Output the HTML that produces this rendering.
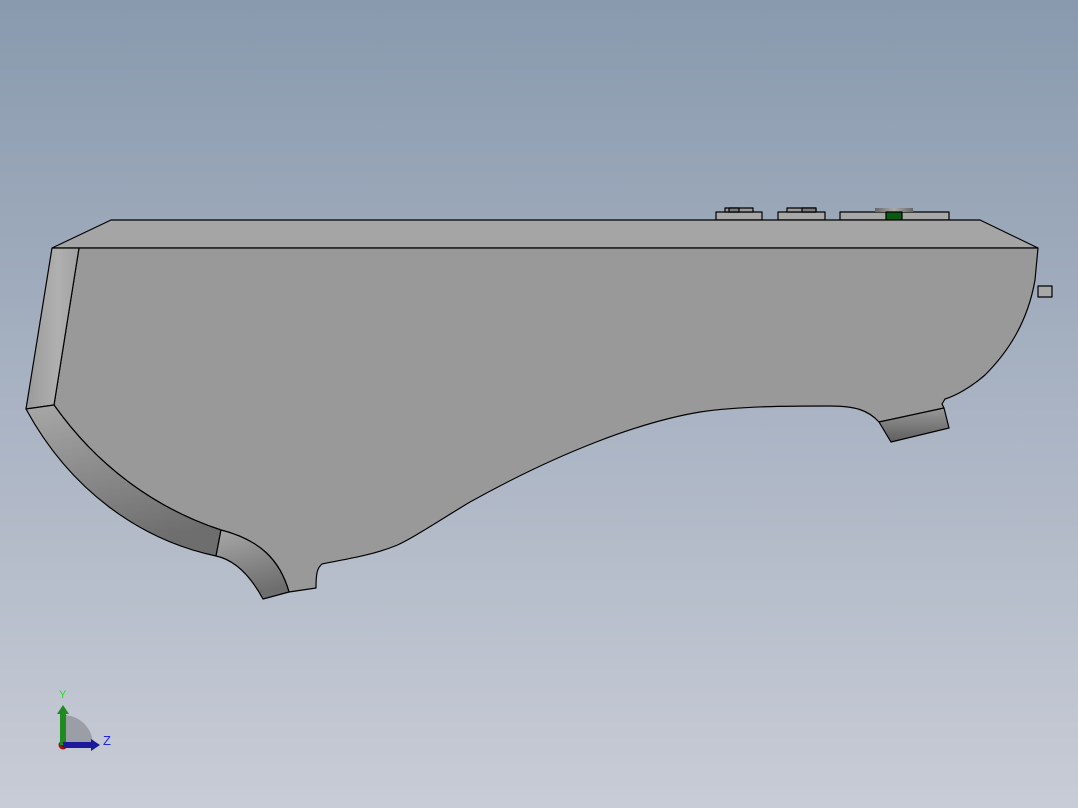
<!DOCTYPE html>
<html><head><meta charset="utf-8"><style>
html,body{margin:0;padding:0}
body{width:1078px;height:808px;overflow:hidden;background:linear-gradient(#899aae,#a9b3c3 50%,#c8ccd6);font-family:"Liberation Sans",sans-serif}
svg{position:absolute;left:0;top:0}
</style></head><body>
<svg width="1078" height="808" viewBox="0 0 1078 808">
<defs>
<linearGradient id="lg" x1="0" y1="0" x2="1" y2="0"><stop offset="0" stop-color="#9a9a9a"/><stop offset="0.6" stop-color="#b0b0b0"/><stop offset="1" stop-color="#a2a2a2"/></linearGradient>
<linearGradient id="cg" x1="0" y1="0" x2="0.3" y2="1"><stop offset="0" stop-color="#a8a8a8"/><stop offset="1" stop-color="#6e6e6e"/></linearGradient>
<linearGradient id="sg" x1="0" y1="0" x2="0" y2="1"><stop offset="0" stop-color="#999"/><stop offset="1" stop-color="#5e5e5e"/></linearGradient>
<linearGradient id="bt" x1="0" y1="0" x2="1" y2="0"><stop offset="0" stop-color="#666"/><stop offset="0.5" stop-color="#aaa"/><stop offset="1" stop-color="#666"/></linearGradient>
</defs>
<g stroke="#000" stroke-width="1.2" stroke-linejoin="round">
<!-- buttons -->
<rect x="716" y="212" width="46" height="8" fill="#a8a8a8"/>
<rect x="725" y="208" width="28" height="4" fill="#9a9a9a"/>
<rect x="729" y="208" width="10" height="4" fill="#7a7a7a"/>
<rect x="778" y="212" width="47" height="8" fill="#a8a8a8"/>
<rect x="787" y="208" width="29" height="4" fill="#9a9a9a"/>
<rect x="802" y="208" width="14" height="4" fill="#7a7a7a"/>
<rect x="840" y="212" width="109" height="8" fill="#a8a8a8"/>
<rect x="875" y="208" width="38" height="4" fill="url(#bt)" stroke="none"/>
<rect x="886" y="212" width="16" height="8" fill="#0a5a12"/>
<!-- top face -->
<polygon points="52,248 111,220 980,220 1038,248" fill="#a5a5a5"/>
<!-- right small -->
<rect x="1038" y="286" width="14" height="11" fill="#a8a8a8"/>
<!-- main face -->
<path d="M79,248 L1038,248 L1035,280 C1028,320 1010,350 985,375 C970,388 955,396 945,399 L942,404 L944,408 L879,422 C868,410 855,406 830,406 C790,406 740,406 700,412 C640,422 560,452 470,502 C440,520 410,540 395,546 C370,556 340,560 322,564 C317,568 316,574 316,588 L289,592 C280,560 260,540 221,530 C160,510 100,470 54,405 Z" fill="#999"/>
<!-- left strip -->
<polygon points="52,248 79,248 54,405 26,409" fill="url(#lg)"/>
<!-- bottom-left curved strip -->
<path d="M26,409 L54,405 C100,470 160,510 221,530 L216,556 C140,540 70,490 26,409 Z" fill="url(#cg)"/>
<path d="M221,530 C260,540 280,560 289,592 L263,599 C250,575 235,560 216,556 Z" fill="url(#cg)"/>
<!-- bottom-right strip -->
<polygon points="879,422 944,408 949,428 891,442" fill="url(#sg)"/>
</g>
<!-- triad -->
<path d="M63,745 L63,715 A30,30 0 0 1 93,745 Z" fill="#9b9ea6"/>
<circle cx="63" cy="745" r="4.5" fill="#a01010"/>
<rect x="60" y="712" width="6" height="33" fill="#1f8a1f"/>
<polygon points="57,714 63,705 69,714" fill="#1f8a1f"/>
<rect x="63" y="742" width="30" height="6" fill="#1a1a9a"/>
<polygon points="91,739 100,745 91,751" fill="#1a1a9a"/>
<text x="59" y="698" font-size="11" fill="#22dd22">Y</text>
<text x="103" y="745" font-size="13" fill="#2222ee">Z</text>
</svg>
</body></html>
